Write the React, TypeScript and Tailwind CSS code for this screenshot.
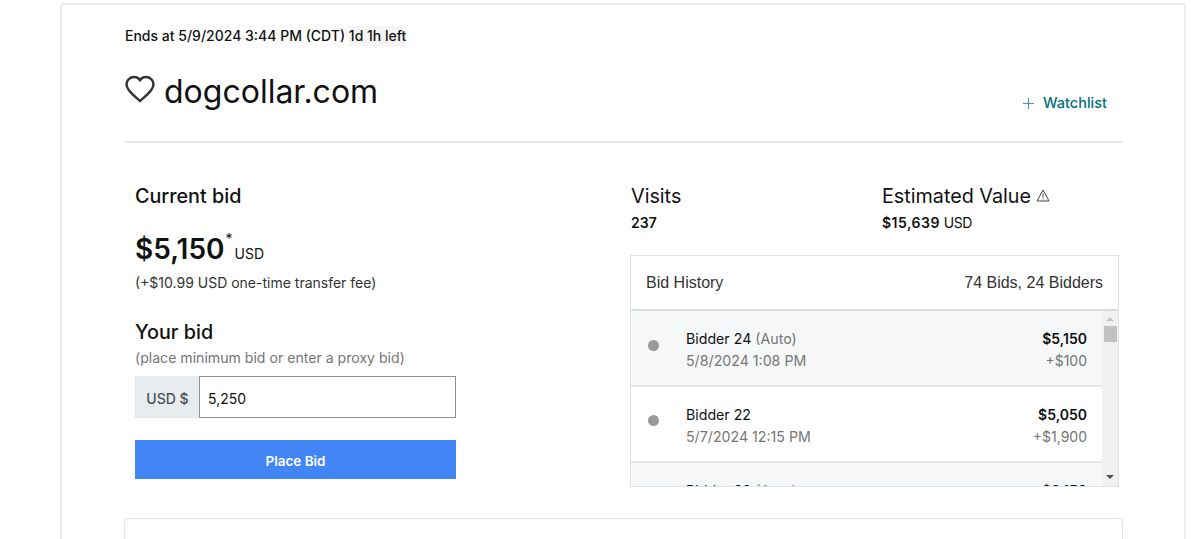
const sans = "font-['Inter','Noto_Sans',sans-serif]";

function Row({ name, auto, date, amount, delta, shaded, rowClass }: { name: string; auto?: boolean; date: string; amount: string; delta: string; shaded?: boolean; rowClass: string }) {
  return (
    <div className={`flex h-[76px] shrink-0 items-center border-b-2 border-[#e3e7ea] pl-[17px] pr-[15px] ${rowClass} ${shaded ? "bg-[#f5f7f8]" : "bg-white"}`}>
      <span className="mb-[10px] mr-[27px] h-[11px] w-[11px] rounded-full bg-[#999999]" />
      <div className="flex-1">
        <div className="text-[14.2px] leading-[22px] text-[#111111]">
          {name} {auto && <span className="text-[#767676]">(Auto)</span>}
        </div>
        <div className="text-[14.2px] leading-[22px] text-[#767676]">{date}</div>
      </div>
      <div className="text-right">
        <div className="text-[14px] font-semibold leading-[22px] text-[#111111]">{amount}</div>
        <div className="text-[14px] leading-[22px] text-[#767676]">{delta}</div>
      </div>
    </div>
  );
}

export default function App() {
  return (
    <div className={`h-[539px] w-[1200px] overflow-hidden bg-white ${sans} text-[#111111]`}>
      <div className="ml-[60px] mt-[3px] h-[560px] w-[1126px] rounded-[4px] border-2 border-[#ebebeb] pl-[62px] pr-[61px] pt-[20px]">
        <div className="pl-[1px] text-[14px] font-medium leading-[22px]">
          Ends at 5/9/2024 3:44 PM (CDT) <span className="inline-block bg-[#f5f5f5] leading-[20px]">1d 1h left</span>
        </div>
        <div className="flex h-[96px] items-start justify-between border-b-2 border-[#e8e8e8]">
          <div className="mt-[23px] flex items-center">
            <svg width="32" height="28" viewBox="0 0 32 28" fill="none" stroke="#333333" strokeWidth="2.5" className="mr-[8px] -mt-[7px]">
              <path d="M16 26 C12 22 2.5 16 2.5 9.5 C2.5 5 6 2 10 2 C12.5 2 14.8 3.2 16 5.5 C17.2 3.2 19.5 2 22 2 C26 2 29.5 5 29.5 9.5 C29.5 16 20 22 16 26 Z" strokeLinejoin="round" />
            </svg>
            <span className="text-[32px] leading-[44px] text-[#111111]">dogcollar.com</span>
          </div>
          <div className="mr-[16px] mt-[46px] flex items-center text-[14.5px] font-medium leading-[20px] text-[#00707a]">
            <svg width="11" height="11" viewBox="0 0 11 11" stroke="#4c9a9f" strokeWidth="1.2" className="mr-[9px]">
              <path d="M5.5 0V11M0 5.5H11" />
            </svg>
            Watchlist
          </div>
        </div>

        <div className="flex">
          <div className="ml-[11px] w-[321px] pt-[40px]">
            <div className="text-[19.75px] font-medium leading-[26px]">Current bid</div>
            <div className="mt-[20px] flex h-[40px] items-start">
              <span className="text-[28px] font-semibold leading-[40px]">$5,150</span>
              <span className="ml-[1px] text-[14px] leading-[20px]">*</span>
              <span className="ml-[2px] mt-[15px] text-[14px] leading-[20px]">USD</span>
            </div>
            <div className="mt-[4px] text-[14px] leading-[20px] text-[#333333]">(+$10.99 USD one-time transfer fee)</div>
            <div className="mt-[26px] text-[19.75px] font-medium leading-[26px]">Your bid</div>
            <div className="mt-[2px] text-[14.1px] leading-[22px] text-[#767676]">(place minimum bid or enter a proxy bid)</div>
            <div className="mt-[7px] flex h-[42px]">
              <div className="flex w-[64px] items-center justify-center border border-r-0 border-[#e4e7ea] bg-[#e9ecef] pt-[2px] text-[14px] font-medium text-[#495057]">USD $</div>
              <div className="flex flex-1 items-center border border-[#8e8e8e] bg-white pl-[8px] pt-[2px] text-[14px] text-[#111111]">5,250</div>
            </div>
            <div className="mt-[22px] flex h-[39px] items-center justify-center bg-[#4285f4] pt-[4px] text-[13.5px] font-semibold text-white">Place Bid</div>
          </div>

          <div className="ml-[174px] flex-1 pt-[40px] pr-[4px]">
            <div className="flex">
              <div className="w-[252px] pl-[1px]">
                <div className="text-[19.75px] leading-[26px]">Visits</div>
                <div className="mt-[2px] text-[14px] font-semibold leading-[24px]">237</div>
              </div>
              <div>
                <div className="flex items-center text-[19.75px] leading-[26px]">
                  Estimated Value
                  <svg width="14" height="13" viewBox="0 0 14 13" fill="none" stroke="#444444" strokeWidth="1" className="ml-[5px] -mt-[2px]">
                    <path d="M7 1 L13 12 H1 Z" strokeLinejoin="round" />
                    <path d="M7 4.5V8.5M7 9.5V10.5" />
                  </svg>
                </div>
                <div className="mt-[2px] text-[14px] leading-[24px]">
                  <span className="font-semibold tracking-[0.5px]">$15,639</span> <span className="tracking-[-0.5px]">USD</span>
                </div>
              </div>
            </div>
            <div className="mt-[20px] flex h-[232px] flex-col overflow-hidden border border-[#dfe3e6]">
              <div className="flex h-[55px] shrink-0 items-center justify-between border-b-2 border-[#d5dde3] pl-[15px] pr-[15px] font-['Liberation_Sans',sans-serif] text-[16px] text-[#333333]">
                <span>Bid History</span>
                <span>74 Bids, 24 Bidders</span>
              </div>
              <div className="flex min-h-0 flex-1">
                <div className="flex min-w-0 flex-1 flex-col overflow-hidden">
                  <Row rowClass="pt-[4px]" shaded name="Bidder 24" auto date="5/8/2024 1:08 PM" amount="$5,150" delta="+$100" />
                  <Row rowClass="pt-[3px]" name="Bidder 22" date="5/7/2024 12:15 PM" amount="$5,050" delta="+$1,900" />
                  <Row rowClass="pt-[4px]" shaded name="Bidder 20" auto date="5/7/2024 12:15 PM" amount="$3,150" delta="+$100" />
                </div>
                <div className="flex w-[16px] shrink-0 flex-col items-center bg-[#f1f1f1]">
                  <svg width="8" height="4" viewBox="0 0 8 4" className="mt-[6px]"><path d="M4 0L8 4H0Z" fill="#c4c4c4" /></svg>
                  <div className="mt-[5px] h-[16px] w-[13px] bg-[#c1c1c1]" />
                  <div className="flex-1" />
                  <svg width="8" height="4" viewBox="0 0 8 4" className="mb-[7px]"><path d="M0 0H8L4 4Z" fill="#505050" /></svg>
                </div>
              </div>
            </div>
          </div>
        </div>

        <div className="mt-[31px] h-[60px] rounded-[4px] border border-[#e3e7ea]" />
      </div>
    </div>
  );
}
